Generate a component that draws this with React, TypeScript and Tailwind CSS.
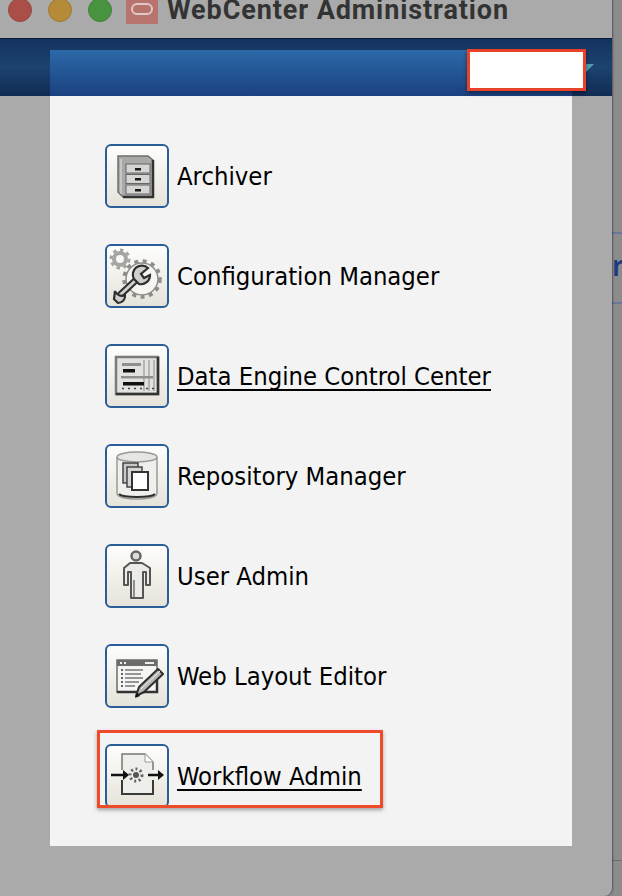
import { ReactNode } from "react";

function ArchiverIcon() {
  return (
    <svg viewBox="0 0 64 64" className="w-full h-full blur-[0.5px]">
      <path d="M13 12H43L48 16V53H18L13 48Z" fill="#a9a9a7" stroke="#6f6f6d" strokeWidth="1.5" />
      <path d="M16 15V50" stroke="#d0d0ce" strokeWidth="1.5" />
      <path d="M48 16V53H18" fill="none" stroke="#333" strokeWidth="2.5" />
      <rect x="21" y="20" width="24" height="9" fill="#d5d5d3" stroke="#666" />
      <rect x="21" y="30.500" width="24" height="9" fill="#d5d5d3" stroke="#666" />
      <rect x="21" y="41" width="24" height="9" fill="#d5d5d3" stroke="#666" />
      <rect x="30" y="24" width="6" height="2.500" fill="#1a1a1a" />
      <rect x="30" y="34" width="6" height="2.500" fill="#1a1a1a" />
      <rect x="30" y="45" width="6" height="2.500" fill="#1a1a1a" />
    </svg>
  );
}

function ConfigIcon() {
  return (
    <svg viewBox="0 0 64 64" className="w-full h-full blur-[0.5px]">
      <circle cx="15" cy="15" r="6" fill="none" stroke="#a5a5a3" strokeWidth="4" />
      <circle cx="15" cy="15" r="9" fill="none" stroke="#a5a5a3" strokeWidth="3" strokeDasharray="3.500 3.500" />
      <circle cx="37" cy="35" r="16" fill="#f6f5f1" stroke="#8c8c8a" strokeWidth="1.5" />
      <circle cx="37" cy="35" r="18" fill="none" stroke="#8c8c8a" strokeWidth="3.5" strokeDasharray="4 4.500" />
      <path d="M15 51L31 36" stroke="#2e2e2e" strokeWidth="7" strokeLinecap="round" />
      <path d="M15 51L31 36" stroke="#cfcfcd" strokeWidth="3" strokeLinecap="round" />
      <path d="M43 24A9 9 0 0 0 29 35L34 40A9 9 0 0 0 45 31L39 34L36 30Z" fill="#cfcfcd" stroke="#2e2e2e" strokeWidth="2.200" />
      <path d="M20 51A7 7 0 0 1 10 47L9 55L13 59A7 7 0 0 0 20 51Z" fill="#cfcfcd" stroke="#2e2e2e" strokeWidth="2.200" />
    </svg>
  );
}

function DataEngineIcon() {
  return (
    <svg viewBox="0 0 64 64" className="w-full h-full blur-[0.5px]">
      <rect x="11" y="13" width="42" height="37" fill="#e2e2e0" stroke="#7a7a78" strokeWidth="2.500" />
      <path d="M53 13V50H11" fill="none" stroke="#333" strokeWidth="2.500" />
      <path d="M39 16V47M44 16V47M49 16V47" stroke="#b5b5b3" strokeWidth="2" />
      <rect x="17" y="19" width="19" height="3" fill="#8f8f8d" />
      <rect x="18" y="25" width="12" height="3.500" fill="#111" />
      <rect x="16" y="32" width="32" height="2.500" fill="#8f8f8d" />
      <rect x="18" y="38" width="21" height="3.500" fill="#111" />
      <path d="M17 44.500H50" stroke="#444" strokeWidth="1.500" strokeDasharray="2 4" />
    </svg>
  );
}

function RepositoryIcon() {
  return (
    <svg viewBox="0 0 64 64" className="w-full h-full blur-[0.5px]">
      <path d="M12 13V49C12 53 21 55 32 55S52 53 52 49V13" fill="#efefec" stroke="#9a9a98" strokeWidth="1.5" />
      <ellipse cx="32" cy="13" rx="20" ry="5" fill="#e6e6e3" stroke="#9a9a98" strokeWidth="1.5" />
      <path d="M14 50C18 54 46 54 50 50" fill="none" stroke="#2e2e2e" strokeWidth="2" />
      <rect x="18" y="19" width="15" height="20" fill="#c8c8c6" stroke="#444" strokeWidth="1.5" />
      <rect x="22" y="23" width="15" height="20" fill="#d5d5d3" stroke="#444" strokeWidth="1.5" />
      <rect x="27" y="28" width="16" height="18" fill="#fff" stroke="#333" strokeWidth="2" />
    </svg>
  );
}

function UserIcon() {
  return (
    <svg viewBox="0 0 64 64" className="w-full h-full blur-[0.5px]">
      <circle cx="31" cy="12" r="4.500" fill="#dcdcda" stroke="#666" strokeWidth="2.500" />
      <path d="M25 19H37L45 24V41H41V28H38V54H26V28H23V41H19V24Z" fill="#ecebe7" stroke="#555" strokeWidth="2" strokeLinejoin="round" />
      <path d="M29 36V53" stroke="#8e8e8c" strokeWidth="2" />
    </svg>
  );
}

function WebLayoutIcon() {
  return (
    <svg viewBox="0 0 64 64" className="w-full h-full blur-[0.5px]">
      <rect x="12" y="16" width="40" height="32" fill="#f5f5f3" stroke="#6c6c6a" strokeWidth="1.5" />
      <rect x="12" y="16" width="40" height="6" fill="#6c6c6a" />
      <rect x="15" y="18" width="2" height="2" fill="#eee" />
      <rect x="19" y="18" width="2" height="2" fill="#eee" />
      <rect x="40" y="18" width="9" height="2" fill="#eee" />
      <path d="M20 26H38M20 30H36M20 34H38M20 38H34M20 42H30" stroke="#777" strokeWidth="1.5" />
      <path d="M16 26H18M16 30H18M16 34H18M16 38H18M16 42H18" stroke="#333" strokeWidth="1.5" />
      <path d="M12 48H52V36" fill="none" stroke="#333" strokeWidth="2.500" />
      <path d="M31 52L34 43L53 25L58 30L39 48Z" fill="#b8b8b6" stroke="#2e2e2e" strokeWidth="2" strokeLinejoin="round" />
      <path d="M36 45L55 27" stroke="#eee" strokeWidth="1" />
      <path d="M30 54L32 49L35 52Z" fill="#111" />
    </svg>
  );
}

function WorkflowIcon() {
  return (
    <svg viewBox="0 0 64 64" className="w-full h-full blur-[0.4px]">
      <path d="M17 26V10H40L48 18V26" fill="#eeeeea" stroke="#777" strokeWidth="1.5" />
      <path d="M17 36V50H48V36" fill="#eeeeea" stroke="#3a3a3a" strokeWidth="2" />
      <path d="M17 26H48V36H17Z" fill="#eeeeea" />
      <path d="M40 10V18H48" fill="#fff" stroke="#999" strokeWidth="1" />
      <path d="M6 31H19" stroke="#111" strokeWidth="2.500" />
      <path d="M24 31L18 26V36Z" fill="#111" />
      <path d="M43 31H53" stroke="#111" strokeWidth="2.500" />
      <path d="M59 31L53 26V36Z" fill="#111" />
      <circle cx="31" cy="31" r="3" fill="#555" />
      <circle cx="31" cy="31" r="6" fill="none" stroke="#666" strokeWidth="3" strokeDasharray="2 2.500" />
    </svg>
  );
}

function MenuRow({ icon, label, underline }: { icon: ReactNode; label: string; underline?: boolean }) {
  return (
    <div className="flex items-center gap-2 h-16">
      <div className="w-16 h-16 shrink-0 rounded-md border-2 border-[#2b5d96] bg-gradient-to-b from-[#fdfdfb] to-[#e6e3da] overflow-hidden">
        <div className="-m-0.5 w-16 h-16">{icon}</div>
      </div>
      <span className={`pt-px text-[25.4px] leading-none text-black font-['DejaVu_Sans',sans-serif] font-stretch-condensed ${underline ? "underline underline-offset-4 decoration-2 [text-decoration-skip-ink:none]" : ""}`}>
        {label}
      </span>
    </div>
  );
}

export default function App() {
  return (
    <div className="relative flex w-[622px] h-[896px] overflow-hidden bg-[#8c8c8c]">
      <div className="flex flex-col w-[612px] h-full shrink-0 bg-[#aaaaaa] rounded-br-lg shadow-[1px_0_2px_rgba(0,0,0,0.4)] z-10">
        {/* title bar, cropped at the top */}
        <div className="flex items-start h-[38px] bg-[#a9aaa9] overflow-hidden">
          <div className="flex gap-4 ml-2 -mt-0.5">
            <div className="w-6 h-6 rounded-full bg-[#a94f48] border border-[#96463f]" />
            <div className="w-6 h-6 rounded-full bg-[#b58a38] border border-[#a27a30]" />
            <div className="w-6 h-6 rounded-full bg-[#48933f] border border-[#3f8237]" />
          </div>
          <div className="flex items-start justify-center ml-3.5 w-8 h-6 bg-[#b8736f]">
            <div className="mt-[3px] w-[22px] h-3 rounded-md border-2 border-[#e0c8c6]" />
          </div>
          <div className="ml-[9px] -mt-[6px] text-[27px] leading-8 font-bold tracking-[0.9px] text-[#333333] font-['Roboto',sans-serif] whitespace-nowrap">
            WebCenter Administration
          </div>
        </div>
        <div className="h-[58px] border-t border-[#081a3c] bg-gradient-to-b from-[#14335e] via-[#1d436f] to-[#102c54]" />
      </div>

      {/* page edge behind the window */}
      <div className="flex flex-col flex-1 pt-[232px]">
        <div className="h-0.5 bg-[#6a7a9c]" />
        <div className="h-[68px] pt-[17px] text-[28px] leading-7 font-semibold font-['Noto_Sans',sans-serif] text-[#1d3b80] overflow-hidden">r</div>
        <div className="h-0.5 bg-[#6a7a9c]" />
        <div className="mt-[556px] h-px bg-[#6e6e6e]" />
      </div>

      {/* menu popup */}
      <div className="absolute z-20 left-[50px] top-[50px] w-[522px] h-[796px] flex flex-col bg-[#f3f3f3]">
        <div className="h-[46px] bg-gradient-to-b from-[#2c69a8] to-[#1b4180]" />
        <div className="flex flex-col gap-9 pt-12 pl-[55px]">
          <MenuRow icon={<ArchiverIcon />} label="Archiver" />
          <MenuRow icon={<ConfigIcon />} label="Configuration Manager" />
          <MenuRow icon={<DataEngineIcon />} label="Data Engine Control Center" underline />
          <MenuRow icon={<RepositoryIcon />} label="Repository Manager" />
          <MenuRow icon={<UserIcon />} label="User Admin" />
          <MenuRow icon={<WebLayoutIcon />} label="Web Layout Editor" />
          <MenuRow icon={<WorkflowIcon />} label="Workflow Admin" underline />
        </div>
      </div>

      {/* small teal arrow next to the masked user name */}
      <div className="absolute z-20 left-[586px] top-16 w-2 h-2 bg-[#4f9fb0] [clip-path:polygon(0_0,100%_0,0_100%)]" />

      {/* annotations drawn over the screenshot */}
      <div className="absolute z-30 left-[467px] top-[49px] w-[119px] h-[42px] bg-white border-[3px] border-[#e8432a] shadow-[0_2px_4px_rgba(0,0,0,0.45)]" />
      <div className="absolute z-30 left-[97px] top-[730px] w-[286px] h-[78px] border-[3px] border-[#ee4b2b] shadow-[0_2px_4px_rgba(0,0,0,0.35)]" />
    </div>
  );
}
